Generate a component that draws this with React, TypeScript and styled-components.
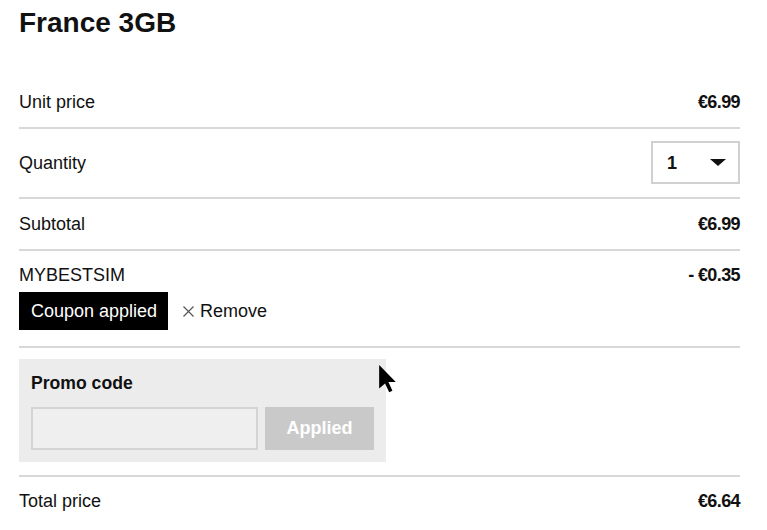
import styled, { createGlobalStyle } from "styled-components";

const GlobalStyle = createGlobalStyle`
  body {
    margin: 0;
    background: #fff;
    font-family: "Liberation Sans", Arial, Helvetica, sans-serif;
    color: #111;
  }
`;

const Page = styled.div`
  padding: 7px 27px 0 19px;
`;

const Title = styled.h1`
  margin: 0 0 37px;
  font-size: 28px;
  line-height: 32px;
  font-weight: 700;
`;

const Row = styled.div<{ pt?: number; pb?: number }>`
  display: flex;
  justify-content: space-between;
  align-items: center;
  padding: ${(p) => p.pt ?? 15}px 0 ${(p) => p.pb ?? 15}px;
  border-bottom: 2px solid #d8d8d8;
  font-size: 18px;
  line-height: 20px;
`;

const Label = styled.span`
  font-size: 18px;
`;

const Price = styled.span`
  font-weight: 700;
  font-size: 18px;
  letter-spacing: -0.6px;
`;

const Select = styled.div`
  box-sizing: border-box;
  width: 89px;
  height: 43px;
  border: 2px solid #d0d0d0;
  display: flex;
  align-items: center;
  justify-content: space-between;
  padding: 0 12px 0 14px;
  font-weight: 700;
  font-size: 18px;
`;

const Caret = styled.span`
  width: 0;
  height: 0;
  border-left: 8px solid transparent;
  border-right: 8px solid transparent;
  border-top: 7px solid #111;
`;

const CouponRow = styled.div`
  padding: 14px 0 16px;
  border-bottom: 2px solid #d8d8d8;
  font-size: 18px;
  line-height: 20px;
`;

const CouponTop = styled.div`
  display: flex;
  justify-content: space-between;
  margin-bottom: 7px;
`;

const CouponActions = styled.div`
  display: flex;
  align-items: center;
  gap: 15px;
`;

const Badge = styled.span`
  display: inline-flex;
  align-items: center;
  height: 38px;
  padding: 0 11px 0 12px;
  background: #000;
  color: #fff;
  font-size: 18px;
`;

const RemoveLink = styled.span`
  display: inline-flex;
  align-items: center;
  gap: 6px;
  font-size: 18px;
  color: #111;
`;

const Cross = styled.svg`
  display: block;
`;

const PromoSection = styled.div`
  position: relative;
  padding: 11px 0 13px;
  border-bottom: 2px solid #d8d8d8;
`;

const PromoBox = styled.div`
  width: 367px;
  box-sizing: border-box;
  background: #ececec;
  padding: 14px 12px 12px;
`;

const PromoTitle = styled.div`
  font-weight: 700;
  font-size: 17.6px;
  line-height: 20px;
  margin-bottom: 14px;
`;

const PromoForm = styled.div`
  display: flex;
  gap: 7px;
`;

const PromoInput = styled.input`
  box-sizing: border-box;
  width: 227px;
  height: 43px;
  background: #efefef;
  border: 2px solid #d4d4d4;
  margin: 0;
  outline: none;
`;

const ApplyButton = styled.button`
  width: 109px;
  height: 43px;
  border: none;
  background: #c9c9c9;
  color: #fff;
  font-family: inherit;
  font-weight: 700;
  font-size: 18px;
  padding: 0;
`;

const Cursor = styled.svg`
  position: absolute;
  left: 360px;
  top: 17px;
`;

const TotalRow = styled.div`
  display: flex;
  justify-content: space-between;
  align-items: center;
  padding: 14px 0;
  font-size: 18px;
  line-height: 20px;
`;

function App() {
  return (
    <Page>
      <GlobalStyle />
      <Title>France 3GB</Title>
      <Row pt={16} pb={15}>
        <Label>Unit price</Label>
        <Price>€6.99</Price>
      </Row>
      <Row pt={12} pb={13}>
        <Label>Quantity</Label>
        <Select>
          1
          <Caret />
        </Select>
      </Row>
      <Row>
        <Label>Subtotal</Label>
        <Price>€6.99</Price>
      </Row>
      <CouponRow>
        <CouponTop>
          <Label>MYBESTSIM</Label>
          <Price>- €0.35</Price>
        </CouponTop>
        <CouponActions>
          <Badge>Coupon applied</Badge>
          <RemoveLink>
            <Cross width="11" height="11" viewBox="0 0 11 11">
              <path d="M0.5 0.5 L10.5 10.5 M10.5 0.5 L0.5 10.5" stroke="#555" strokeWidth="1.2" />
            </Cross>
            Remove
          </RemoveLink>
        </CouponActions>
      </CouponRow>
      <PromoSection>
        <PromoBox>
          <PromoTitle>Promo code</PromoTitle>
          <PromoForm>
            <PromoInput />
            <ApplyButton>Applied</ApplyButton>
          </PromoForm>
        </PromoBox>
        {/* mouse pointer captured in the screenshot */}
        <Cursor width="18" height="28" viewBox="0 0 12 19">
          <path d="M0 0 L0 16 L4 12.5 L6.8 18.5 L9 17.5 L6.3 11.6 L11.3 11.6 Z" fill="#000" />
        </Cursor>
      </PromoSection>
      <TotalRow>
        <Label>Total price</Label>
        <Price>€6.64</Price>
      </TotalRow>
    </Page>
  );
}

export default App;
